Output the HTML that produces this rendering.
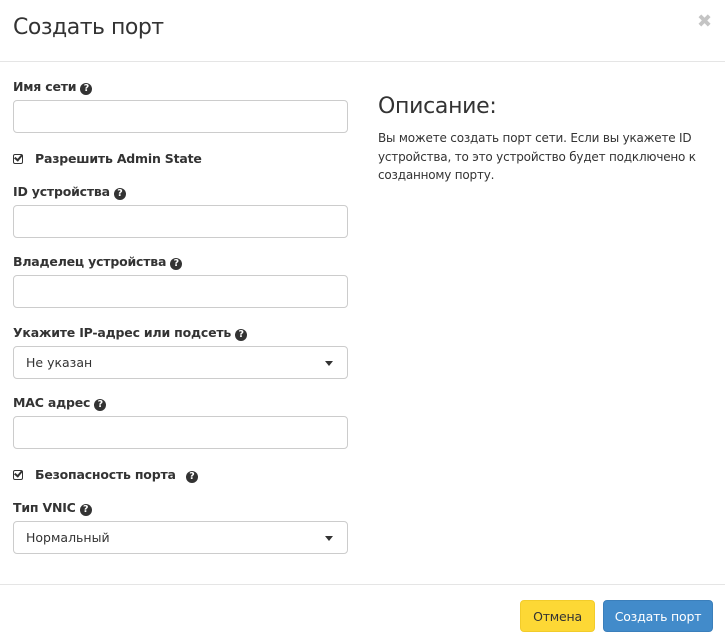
<!DOCTYPE html>
<html><head><meta charset="utf-8"><style>
*{box-sizing:border-box;margin:0;padding:0}
body{width:725px;height:643px;background:#fff;font-family:"DejaVu Sans","Liberation Sans",sans-serif;color:#333;position:relative;overflow:hidden}
.abs{position:absolute}
.title{left:13px;top:15px;font-size:22px;font-weight:normal;color:#333;letter-spacing:-0.5px}
.close{left:697px;top:11px;font-size:18px;color:#c4c4c4;font-weight:bold}
.hr{left:0;width:725px;height:1px;background:#e5e5e5}
.lbl{left:13px;font-size:12.5px;font-weight:bold;color:#333;letter-spacing:-0.2px}
.q{display:inline-block;width:12px;height:12px;border-radius:50%;background:#333;color:#fff;font-size:9.5px;line-height:12px;text-align:center;vertical-align:0px;margin-left:4px;font-weight:bold}
.inp{left:13px;width:335px;height:33px;border:1px solid #ccc;border-radius:4px;background:#fff}
.sel{font-size:12.5px;color:#333;padding:8px 12px;line-height:15px}
.caret{position:absolute;right:14px;top:14px;width:0;height:0;border-left:4px solid transparent;border-right:4px solid transparent;border-top:5px solid #333}
.cb{left:13px;font-size:12.5px;font-weight:bold;letter-spacing:-0.2px}
.box{display:inline-block;width:10px;height:10px;border:1.5px solid #333;border-radius:2px;position:relative;margin-right:12px;vertical-align:-1px}
.box:after{content:"";position:absolute;left:2px;top:-2px;width:3px;height:6px;border:solid #333;border-width:0 2px 2px 0;transform:rotate(40deg)}
.btn{top:600px;height:32px;border-radius:4px;font-size:12.5px;line-height:32px;text-align:center;letter-spacing:-0.2px}
</style></head><body>
<div class="abs title">Создать порт</div>
<div class="abs close">✖</div>
<div class="abs hr" style="top:61px"></div>

<div class="abs lbl" style="top:79px">Имя сети<span class="q">?</span></div>
<div class="abs inp" style="top:100px"></div>
<div class="abs cb" style="top:151px"><span class="box"></span>Разрешить Admin State</div>

<div class="abs lbl" style="top:184px">ID устройства<span class="q">?</span></div>
<div class="abs inp" style="top:205px"></div>

<div class="abs lbl" style="top:254px">Владелец устройства<span class="q">?</span></div>
<div class="abs inp" style="top:275px"></div>

<div class="abs lbl" style="top:325px">Укажите IP-адрес или подсеть<span class="q">?</span></div>
<div class="abs inp sel" style="top:346px">Не указан<span class="caret"></span></div>

<div class="abs lbl" style="top:395px">MAC адрес<span class="q">?</span></div>
<div class="abs inp" style="top:416px"></div>

<div class="abs cb" style="top:467px"><span class="box"></span>Безопасность порта <span class="q" style="margin-left:6px">?</span></div>

<div class="abs lbl" style="top:500px">Тип VNIC<span class="q">?</span></div>
<div class="abs inp sel" style="top:521px">Нормальный<span class="caret"></span></div>

<div class="abs" style="left:378px;top:94px;font-size:22px;color:#333;letter-spacing:-0.3px">Описание:</div>
<div class="abs" style="left:378px;top:129px;width:340px;font-size:12px;line-height:18.5px;color:#333;letter-spacing:-0.2px">Вы можете создать порт сети. Если вы укажете ID устройства, то это устройство будет подключено к созданному порту.</div>

<div class="abs hr" style="top:584px"></div>
<div class="abs btn" style="left:520px;width:75px;background:#fdd835;border:1px solid #f2cc2a;color:#333">Отмена</div>
<div class="abs btn" style="left:603px;width:110px;background:#428bca;border:1px solid #3b7fbb;color:#fff">Создать порт</div>
</body></html>
